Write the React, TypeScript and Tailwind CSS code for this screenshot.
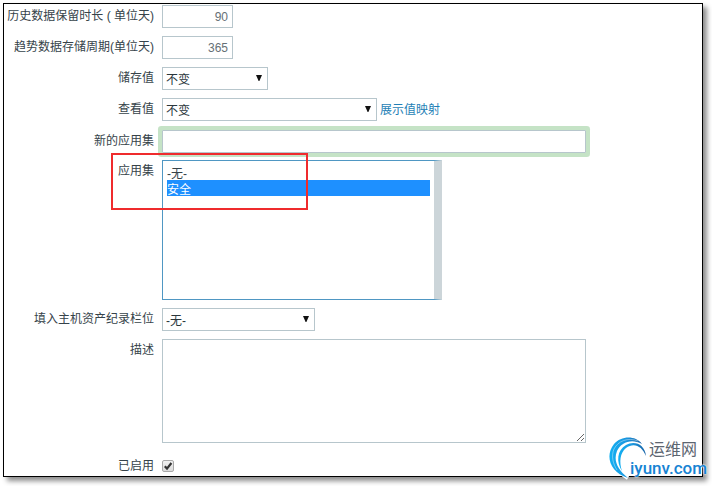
import { useState } from 'react'
import type { ReactNode } from 'react'

const fieldClass = 'h-[23px] border border-[#b7c6cc] bg-white text-[12px] leading-4 outline-none'

function Row({ label, htmlFor, children }: { label: string; htmlFor: string; children: ReactNode }) {
  return (
    <div className="relative flex items-start gap-2">
      <label htmlFor={htmlFor} className="w-[150px] shrink-0 text-right leading-[23px] whitespace-nowrap">
        {label}
      </label>
      {children}
    </div>
  )
}

function Dropdown({ id, width, options }: { id: string; width: string; options: string[] }) {
  return (
    <div className={`relative ${width}`}>
      <select id={id} className={`${fieldClass} block w-full appearance-none pt-[2px] pl-[3px] text-[#2a363c]`}>
        {options.map(o => (
          <option key={o}>{o}</option>
        ))}
      </select>
      <svg viewBox="0 0 6 6" className="pointer-events-none absolute top-2 right-[6px] size-[6px]" aria-hidden="true">
        <path d="M0 0h6L3.4 6h-.8z" fill="#111" />
      </svg>
    </div>
  )
}

function Watermark() {
  return (
    <div className="pointer-events-none absolute -right-[5px] -bottom-[4px] flex h-11 w-[98px] justify-end">
      <svg viewBox="0 0 42 44" className="absolute top-0 left-0 h-11 w-[42px]" aria-hidden="true">
        <defs>
          <linearGradient id="swoosh" x1="0" y1="0" x2="1" y2="0">
            <stop offset="0" stopColor="#12b0f2" />
            <stop offset="0.5" stopColor="#1c98e0" />
            <stop offset="1" stopColor="#1560a4" />
          </linearGradient>
        </defs>
        <path d="M8 30C10 36 14 39 19 42" fill="none" stroke="#fff" strokeWidth="4" />
        <path d="M33 8C26 -1 12 0 5 8C-4 19 0 36 19 42C9 34 4 25 8 15C12 6 23 2 33 8Z" fill="url(#swoosh)" />
        <path d="M37 20C36 8 25 4 17 9C8 14 7 26 13 35C10 26 11 17 17 12C25 6 33 10 37 20Z" fill="url(#swoosh)" />
        <path d="M29 5C19 1 9 5 5 13C2 20 4 28 8 34" fill="none" stroke="#fff" strokeWidth="0.4" />
      </svg>
      <div className="flex flex-col items-end">
        <span className="mt-1 mr-[10px] text-[16px] leading-5 text-[#5c6570]">运维网</span>
        <span className="font-[Roboto,sans-serif] text-[17px] leading-4 font-medium text-[#1683d3] [text-shadow:0_0_2px_#fff,0_0_2px_#fff]">
          iyunv.com
        </span>
      </div>
    </div>
  )
}

export default function App() {
  const [apps, setApps] = useState(['安全'])
  const [enabled, setEnabled] = useState(true)

  return (
    <div className="overflow-hidden bg-white pt-[3px] pr-[9px] pb-[9px] pl-[3px] font-['Liberation_Sans','Noto_Sans_CJK_SC',sans-serif] text-[12px] text-[#36434a]">
      <form className="relative flex flex-col gap-2 border border-black bg-white shadow-[4px_4px_5px_rgba(0,0,0,0.45)]">
        <div className="flex flex-col gap-2 pt-px">
          <Row label="历史数据保留时长 ( 单位天)" htmlFor="history">
            <input id="history" defaultValue="90" className={`${fieldClass} w-[71px] px-1 text-right text-[#667076]`} />
          </Row>
          <Row label="趋势数据存储周期(单位天)" htmlFor="trends">
            <input id="trends" defaultValue="365" className={`${fieldClass} w-[71px] px-1 text-right text-[#667076]`} />
          </Row>
          <Row label="储存值" htmlFor="store">
            <Dropdown id="store" width="w-[106px]" options={['不变']} />
          </Row>
          <Row label="查看值" htmlFor="show">
            <Dropdown id="show" width="w-[215px]" options={['不变']} />
            <a href="#mapping" className="-ml-[5px] leading-6 text-[#1f7fb6]">
              展示值映射
            </a>
          </Row>
        </div>
        <div className="flex flex-col gap-[7px]">
          <Row label="新的应用集" htmlFor="new-app">
            <input id="new-app" className={`${fieldClass} w-[424px] rounded-[1px] px-1 shadow-[0_0_0_4px_#c5e3c6]`} />
          </Row>
          <Row label="应用集" htmlFor="apps">
            <select
              id="apps"
              multiple
              value={apps}
              onChange={e => setApps(Array.from(e.target.selectedOptions, o => o.value))}
              className="h-[140px] w-[280px] overflow-hidden border border-r-8 border-[#4f97c3] border-r-[#ccd5d9] bg-white px-1 py-[3px] text-[12px] text-[#36434a] outline-none"
            >
              {['-无-', '安全'].map(o => (
                <option
                  key={o}
                  value={o}
                  className="h-4 min-h-4 p-0 leading-4 checked:bg-[linear-gradient(#1e90ff,#1e90ff)] checked:text-white"
                >
                  {o}
                </option>
              ))}
            </select>
            <div className="pointer-events-none absolute -top-[7px] left-[107px] h-[57px] w-[197px] border-2 border-[#ef2b2d]" />
          </Row>
        </div>
        <Row label="填入主机资产纪录栏位" htmlFor="inventory">
          <Dropdown id="inventory" width="w-[153px]" options={['-无-']} />
        </Row>
        <Row label="描述" htmlFor="description">
          <textarea id="description" className="h-[104px] w-[424px] border border-[#b7c6cc] bg-white p-1 outline-none" />
        </Row>
        <div className="flex h-[25px] items-center gap-2 pt-1">
          <label htmlFor="enabled" className="w-[150px] text-right">
            已启用
          </label>
          <span className="relative size-3">
            <input
              id="enabled"
              type="checkbox"
              checked={enabled}
              onChange={e => setEnabled(e.target.checked)}
              className="block size-3 appearance-none rounded-xs border border-[#a9a9a9] bg-linear-to-b from-[#f0f0f0] to-[#dcdcdc]"
            />
            {enabled && (
              <svg viewBox="0 0 12 12" className="pointer-events-none absolute inset-0 size-3" aria-hidden="true">
                <path d="M2.8 6.2 5 8.6 9.4 3" fill="none" stroke="#333" strokeWidth="2.2" />
              </svg>
            )}
          </span>
        </div>
        <Watermark />
      </form>
    </div>
  )
}
